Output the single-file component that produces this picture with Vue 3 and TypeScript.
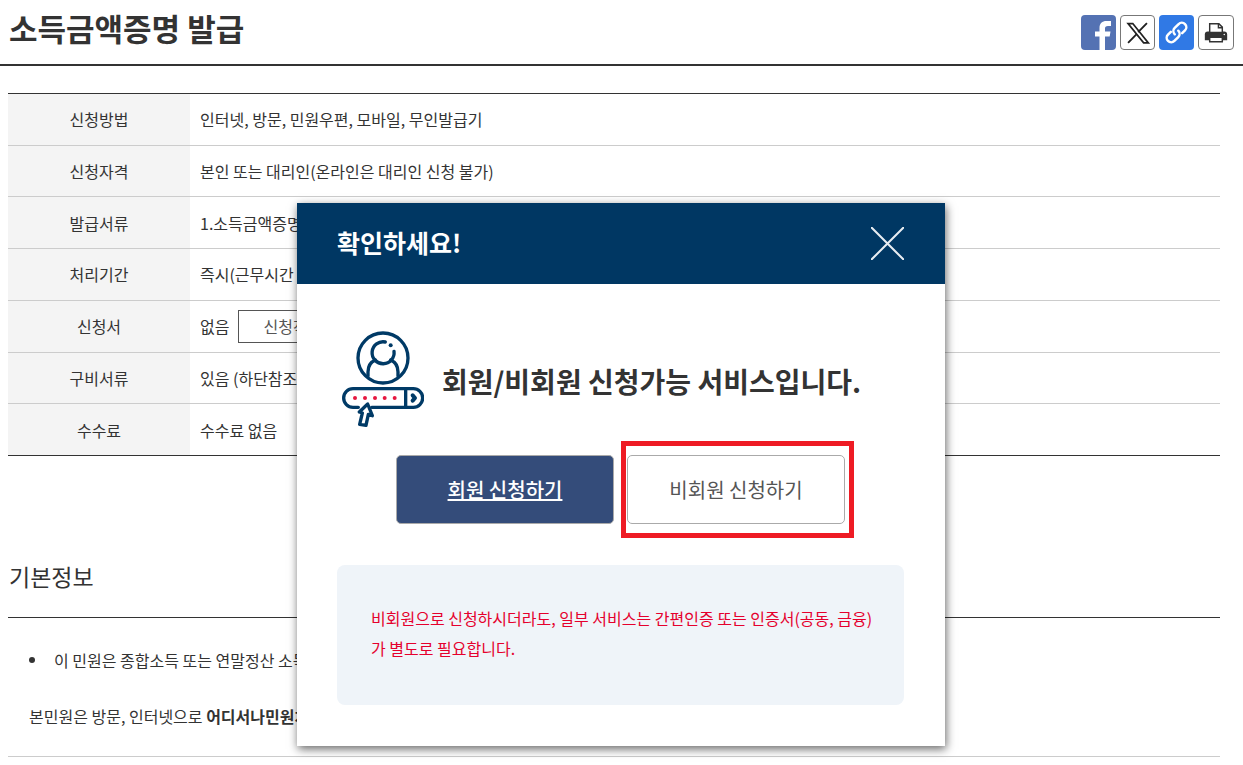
<script setup lang="ts">
interface Row {
  label: string
  value: string
  action?: string
}

const rows: Row[] = [
  { label: '신청방법', value: '인터넷, 방문, 민원우편, 모바일, 무인발급기' },
  { label: '신청자격', value: '본인 또는 대리인(온라인은 대리인 신청 불가)' },
  { label: '발급서류', value: '1.소득금액증명' },
  { label: '처리기간', value: '즉시(근무시간 내)' },
  { label: '신청서', value: '없음', action: '신청작성예시' },
  { label: '구비서류', value: '있음 (하단참조)' },
  { label: '수수료', value: '수수료 없음' },
]
</script>

<template>
  <div class="page">
    <header class="page-head">
      <h1>소득금액증명 발급</h1>
      <div class="share">
        <a href="#" class="facebook" aria-label="페이스북">
          <svg viewBox="0 0 35 35"><path fill="#fff" d="M18.500 35V21.500h-4.500v-5h4.500v-3.500c0-4.800 2.600-7 7-7h4.500v5h-3c-2.300 0-3 .8-3 2.700v2.800h5.500l-.8 5H24V35z" /></svg>
        </a>
        <a href="#" class="outlined" aria-label="X">
          <svg viewBox="0 0 35 35" fill="none" stroke="#222">
            <path stroke-width="1.800" d="M7.500 8h5l16.500 20.500h-5z" />
            <path stroke-width="2" d="M27.500 7.500l-9.300 9.700M16.300 19.500L7.500 28.500" />
          </svg>
        </a>
        <a href="#" class="link" aria-label="링크 복사">
          <svg viewBox="0 0 35 35" fill="none" stroke="#fff" stroke-width="2.500" stroke-linecap="round">
            <g transform="rotate(-45 17.500 17.500)">
              <path d="M14 13H10a4.500 4.500 0 0 0 0 9h5.500a4.500 4.500 0 0 0 4.500-4.500" />
              <path d="M21 22h4a4.500 4.500 0 0 0 0-9h-5.500a4.500 4.500 0 0 0-4.500 4.500" />
            </g>
          </svg>
        </a>
        <button type="button" class="outlined" aria-label="인쇄">
          <svg viewBox="0 0 35 35">
            <path fill="#333" d="M9 16h17a3 3 0 0 1 3 3v6H6v-6a3 3 0 0 1 3-3z" />
            <path fill="#fff" stroke="#333" stroke-width="1.500" d="M11 17V8h9.500l3.500 3.500v5.500z" />
            <path fill="none" stroke="#333" stroke-width="1.500" d="M20 8V12h4" />
            <path fill="#fff" stroke="#333" stroke-width="1.500" d="M11 22H24V26.500H11z" />
            <circle cx="26" cy="19" r="0.800" fill="#fff" />
          </svg>
        </button>
      </div>
    </header>

    <main>
      <table>
        <tbody>
          <tr v-for="row in rows" :key="row.label">
            <th scope="row">{{ row.label }}</th>
            <td>
              <div class="value">
                <span>{{ row.value }}</span>
                <button v-if="row.action" type="button" class="sample">{{ row.action }}</button>
              </div>
            </td>
          </tr>
        </tbody>
      </table>

      <section class="info">
        <h2>기본정보</h2>
        <div class="info-body">
          <ul>
            <li>이 민원은 종합소득 또는 연말정산 소득</li>
          </ul>
          <p>본민원은 방문, 인터넷으로 <strong>어디서나민원처리</strong></p>
        </div>
      </section>
    </main>

    <div class="overlay">
      <div class="modal" role="dialog" aria-labelledby="modal-title">
        <div class="modal-head">
          <h2 id="modal-title">확인하세요!</h2>
          <button type="button" class="close" aria-label="닫기">
            <svg viewBox="0 0 32 32" stroke="#e8edf2" stroke-width="2"><path d="M0 0L32 32M32 0L0 32" /></svg>
          </button>
        </div>
        <div class="modal-body">
          <div class="lead">
            <svg viewBox="36 33 246 288" fill="none" stroke="#003a66" stroke-width="10" stroke-linecap="round" stroke-linejoin="round" aria-hidden="true">
              <circle cx="159" cy="114" r="75" />
              <path d="M166 66A33 33 0 1 0 192 94" />
              <circle cx="182" cy="76" r="6" fill="#003a66" stroke="none" />
              <path d="M114 168v-12c0-18 8-30 22-36M204 168v-12c0-18-8-30-22-36" />
              <path d="M85 262H69a28 28 0 0 1 0-56H250a28 28 0 0 1 0 56H125" />
              <path d="M227 207V261" />
              <path stroke-width="12" d="M248 226l7 8-7 8" />
              <path d="M113 252L88 276l9 3-8 34 19 3 7-33 12 4z" />
              <g fill="#e6173f" stroke="none">
                <circle cx="75" cy="234" r="6" />
                <circle cx="105" cy="234" r="6" />
                <circle cx="135" cy="234" r="6" />
                <circle cx="164" cy="234" r="6" />
                <circle cx="194" cy="234" r="6" />
              </g>
            </svg>
            <strong>회원/비회원 신청가능 서비스입니다.</strong>
          </div>
          <div class="choices">
            <a href="#" class="choice member">회원 신청하기</a>
            <div class="guest-wrap">
              <a href="#" class="choice guest">비회원 신청하기</a>
              <span class="highlight"></span>
            </div>
          </div>
          <p class="note">
            비회원으로 신청하시더라도, 일부 서비스는 간편인증 또는 인증서(공동, 금융)<br />가 별도로 필요합니다.
          </p>
        </div>
      </div>
    </div>
  </div>
</template>

<style>
body {
  margin: 0;
  background: #fff;
}
</style>

<style scoped>
.page {
  position: relative;
  min-height: 100vh;
  overflow: hidden;
  color: #333;
  font-family: "Noto Sans CJK KR", "Noto Sans", sans-serif;
  font-size: 16px;
  line-height: 24px;
}
.page * {
  box-sizing: border-box;
}
h1, h2, p, ul {
  margin: 0;
  padding: 0;
}
button {
  font: inherit;
  color: inherit;
  background: none;
  padding: 0;
  cursor: pointer;
}
svg {
  display: block;
}
.page-head {
  display: flex;
  justify-content: space-between;
  align-items: center;
  height: 66px;
  padding: 0 9px;
  border-bottom: 2px solid #333;
}
h1 {
  font-size: 31px;
  line-height: 40px;
  padding-bottom: 8px;
}
.share {
  display: flex;
  gap: 4px;
}
.share a, .share button {
  width: 35px;
  height: 35px;
  border-radius: 4px;
  overflow: hidden;
}
.share button {
  width: 36px;
}
.facebook {
  background: #5472b3;
}
.link {
  background: #3079e5;
}
.outlined {
  border: 1px solid #777;
}
main {
  padding: 27px 23px 0 8px;
}
table {
  width: 100%;
  height: 363px;
  border-collapse: collapse;
  border-top: 1px solid #333;
  border-bottom: 1px solid #333;
}
tr + tr {
  border-top: 1px solid #ccc;
}
th {
  width: 182px;
  height: 51px;
  padding: 0;
  background: #f4f4f4;
  font-weight: 400;
  text-align: center;
}
td {
  height: 51px;
  padding: 0 10px;
}
.value {
  display: flex;
  align-items: center;
  gap: 9px;
}
.sample {
  height: 33px;
  padding: 0 24px;
  border: 1px solid #555;
  color: #555;
}
.info {
  padding-top: 102px;
}
.info h2 {
  padding: 0 1px 23px;
  border-bottom: 1px solid #333;
  font-size: 23px;
  line-height: 36px;
  font-weight: 400;
}
.info-body {
  padding: 30px 21px 28px;
  border-bottom: 1px solid #ccc;
}
.info ul {
  list-style: none;
}
.info li {
  display: flex;
  align-items: center;
  gap: 19px;
}
.info li::before {
  content: "";
  width: 6px;
  height: 6px;
  border-radius: 50%;
  background: #333;
}
.info p {
  padding-top: 32px;
}
.overlay {
  position: absolute;
  inset: 0;
  display: flex;
  justify-content: center;
  align-items: flex-start;
  padding: 203px 1px 0 0;
}
.modal {
  width: 648px;
  background: #fff;
  box-shadow: 1px 3px 9px rgba(0, 0, 0, 0.6);
}
.modal-head {
  display: flex;
  justify-content: space-between;
  align-items: center;
  height: 81px;
  padding: 0 41px 0 40px;
  background: #003763;
  color: #fff;
}
.modal-head h2 {
  padding-bottom: 3px;
  font-size: 25px;
  line-height: 36px;
}
.close {
  width: 33px;
  height: 33px;
  border: 0;
}
.modal-body {
  padding: 47px 41px 41px 40px;
}
.lead {
  display: flex;
  align-items: center;
  gap: 18px;
  padding-left: 5px;
}
.lead svg {
  flex: none;
  width: 82px;
  height: 96px;
}
.lead strong {
  padding-top: 4px;
  font-size: 28px;
  line-height: 40px;
  white-space: nowrap;
}
.choices {
  display: flex;
  justify-content: center;
  gap: 13px;
  padding-top: 28px;
}
.choice {
  display: flex;
  align-items: center;
  justify-content: center;
  width: 218px;
  height: 69px;
  border: 1px solid #aaa;
  border-radius: 5px;
  font-size: 20px;
}
.member {
  background: #344c7a;
  color: #fff;
  font-weight: 500;
}
.guest {
  color: #555;
  text-decoration: none;
}
.guest-wrap {
  position: relative;
}
.highlight {
  position: absolute;
  inset: -14px -9px -14px -6px;
  border: 5px solid #ee1b24;
  pointer-events: none;
}
.note {
  margin-top: 41px;
  padding: 38px 0 42px 34px;
  border-radius: 8px;
  background: #eff4f9;
  color: #e5002d;
  line-height: 30px;
  white-space: nowrap;
}
</style>
